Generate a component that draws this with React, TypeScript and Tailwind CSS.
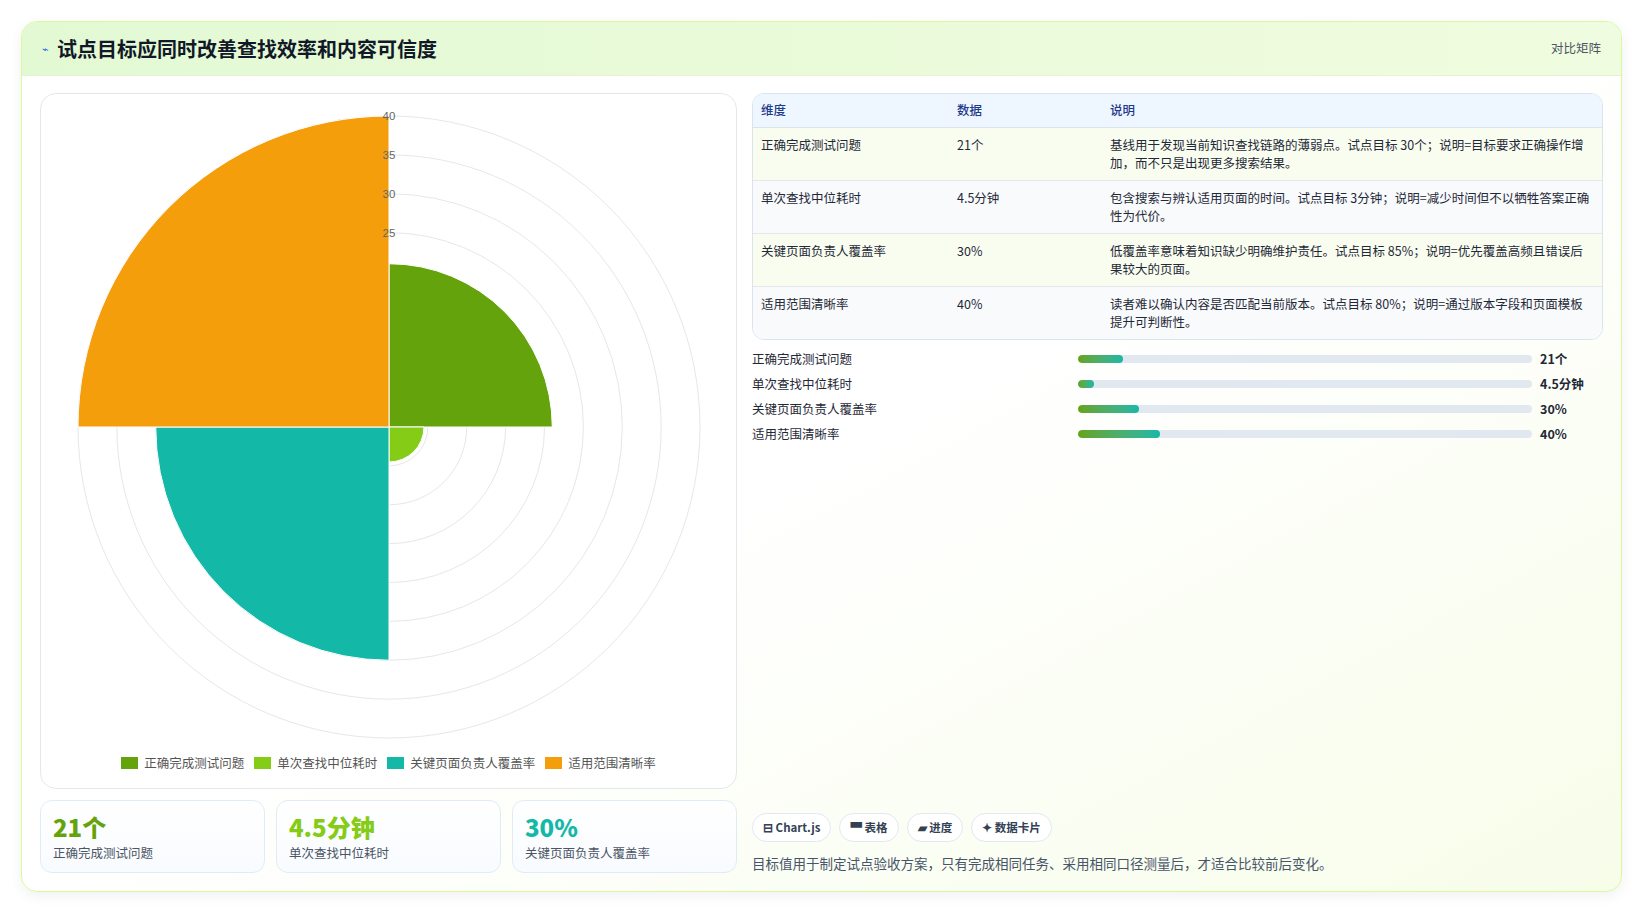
import React from "react";

const rows = [
  { name: "正确完成测试问题", value: "21个", desc: "基线用于发现当前知识查找链路的薄弱点。试点目标 30个；说明=目标要求正确操作增加，而不只是出现更多搜索结果。", pct: 10 },
  { name: "单次查找中位耗时", value: "4.5分钟", desc: "包含搜索与辨认适用页面的时间。试点目标 3分钟；说明=减少时间但不以牺牲答案正确性为代价。", pct: 3.5 },
  { name: "关键页面负责人覆盖率", value: "30%", desc: "低覆盖率意味着知识缺少明确维护责任。试点目标 85%；说明=优先覆盖高频且错误后果较大的页面。", pct: 13.5 },
  { name: "适用范围清晰率", value: "40%", desc: "读者难以确认内容是否匹配当前版本。试点目标 80%；说明=通过版本字段和页面模板提升可判断性。", pct: 18 },
];

const segs = [
  { v: 21, c: "#65a30d", a0: -90, label: "正确完成测试问题" },
  { v: 4.5, c: "#84cc16", a0: 0, label: "单次查找中位耗时" },
  { v: 30, c: "#14b8a6", a0: 90, label: "关键页面负责人覆盖率" },
  { v: 40, c: "#f59e0b", a0: 180, label: "适用范围清晰率" },
];

function wedge(cx: number, cy: number, r: number, a0: number) {
  const t = (a: number) => [cx + r * Math.cos((a * Math.PI) / 180), cy + r * Math.sin((a * Math.PI) / 180)];
  const [x0, y0] = t(a0);
  const [x1, y1] = t(a0 + 90);
  return `M${cx},${cy} L${x0},${y0} A${r},${r} 0 0 1 ${x1},${y1} Z`;
}

function Polar() {
  const cx = 348, cy = 333, R = 311;
  return (
    <svg width="695" height="652" className="block">
      {[1, 2, 3, 4, 5, 6, 7, 8].map((i) => (
        <circle key={i} cx={cx} cy={cy} r={(R * i) / 8} fill="none" stroke="#e5e7eb" strokeWidth="1" />
      ))}
      {segs.map((s) => (
        <path key={s.label} d={wedge(cx, cy, (R * s.v) / 40, s.a0)} fill={s.c} stroke="#fff" strokeWidth="1" />
      ))}
      {[40, 35, 30, 25].map((n, i) => (
        <text key={n} x={cx} y={cy - R + (i * R) / 8 + 4} fontSize="11.5" fill="#666" textAnchor="middle" fontFamily="Liberation Sans">{n}</text>
      ))}
    </svg>
  );
}

export default function App() {
  return (
    <div className="w-[1642px] h-[913px] bg-white p-[21px] text-[#1f2937]" style={{ fontFamily: '"Noto Sans CJK SC", "Noto Sans", sans-serif' }}>
      <div className="w-[1601px] h-[871px] rounded-2xl border border-[#d9f99d] bg-gradient-to-br from-white via-white to-[#f7fde9] shadow-[0_4px_14px_rgba(0,0,0,0.06)] overflow-hidden flex flex-col">
        <div className="h-[54px] shrink-0 flex items-center justify-between px-5 bg-gradient-to-r from-[#e3f9d4] to-[#f0fcdf] border-b border-[#e5f3d3]">
          <div className="flex items-center gap-2">
            <span className="text-[#2563eb] text-[11px]">⌁</span>
            <h1 className="text-[20px] font-bold text-[#111827]">试点目标应同时改善查找效率和内容可信度</h1>
          </div>
          <span className="text-[12.5px] text-[#4b5563]">对比矩阵</span>
        </div>
        <div className="flex gap-[15px] px-[18px] pt-[17px] flex-1">
          <div className="w-[697px] flex flex-col gap-[11px]">
            <div className="h-[696px] rounded-2xl border border-[#e5e7eb] bg-white flex flex-col items-center overflow-hidden">
              <Polar />
              <div className="flex gap-2.5 text-[12.5px] text-[#555] mt-[8px]">
                {segs.map((s) => (
                  <div key={s.label} className="flex items-center gap-1.5">
                    <span className="w-[17px] h-[12px] inline-block" style={{ background: s.c }} />
                    {s.label}
                  </div>
                ))}
              </div>
            </div>
            <div className="grid grid-cols-3 gap-[11px]">
              {[
                ["21个", "正确完成测试问题", "text-[#65a30d]"],
                ["4.5分钟", "单次查找中位耗时", "text-[#84cc16]"],
                ["30%", "关键页面负责人覆盖率", "text-[#14b8a6]"],
              ].map(([v, l, c]) => (
                <div key={l} className="h-[73px] rounded-xl border border-[#e0ecf5] bg-gradient-to-b from-white to-[#f8fbff] px-3 pt-2.5">
                  <div className={`text-[24px] font-extrabold leading-[31px] ${c}`}>{v}</div>
                  <div className="text-[12.5px] text-[#4b5563] mt-0.5">{l}</div>
                </div>
              ))}
            </div>
          </div>
          <div className="flex-1 flex flex-col">
            <div className="rounded-xl border border-[#dbe4ee] overflow-hidden bg-white">
              <table className="w-full text-[12.5px] text-left">
                <thead>
                  <tr className="bg-[#eef6ff] text-[#1e3a8a] h-[33px] border-b border-[#dbe4ee]">
                    <th className="font-medium pl-2 w-[204px]">维度</th>
                    <th className="font-medium w-[153px]">数据</th>
                    <th className="font-medium">说明</th>
                  </tr>
                </thead>
                <tbody>
                  {rows.map((r, i) => (
                    <tr key={r.name} className={`${i % 2 === 0 ? "bg-[#f9fdf0]" : "bg-[#f8fafc]"} border-b border-[#e5e7eb] last:border-b-0 align-top h-[53px]`}>
                      <td className="pl-2 pt-2">{r.name}</td>
                      <td className="pt-2">{r.value}</td>
                      <td className="pt-2 pr-2 leading-[18px]">{r.desc}</td>
                    </tr>
                  ))}
                </tbody>
              </table>
            </div>
            <div className="flex flex-col gap-[9px] mt-[11px] text-[12.5px]">
              {rows.map((r) => (
                <div key={r.name} className="flex items-center h-[16px]">
                  <div className="w-[326px]">{r.name}</div>
                  <div className="w-[454px] h-2 rounded-full bg-[#e2e8f0] overflow-hidden">
                    <div className="h-full rounded-full bg-gradient-to-r from-[#65a30d] to-[#14b8a6]" style={{ width: `${r.pct}%` }} />
                  </div>
                  <div className="ml-2 font-semibold">{r.value}</div>
                </div>
              ))}
            </div>
            <div className="mt-auto mb-[18px]">
              <div className="flex gap-2 text-[11.5px] font-semibold text-[#334155]">
                {["⊟ Chart.js", "▀ 表格", "▰ 进度", "✦ 数据卡片"].map((c) => (
                  <span key={c} className="px-2.5 py-[5px] rounded-full border border-[#e2e8f0] bg-white">{c}</span>
                ))}
              </div>
              <p className="text-[13.5px] text-[#475569] mt-[11px]">目标值用于制定试点验收方案，只有完成相同任务、采用相同口径测量后，才适合比较前后变化。</p>
            </div>
          </div>
        </div>
      </div>
    </div>
  );
}
